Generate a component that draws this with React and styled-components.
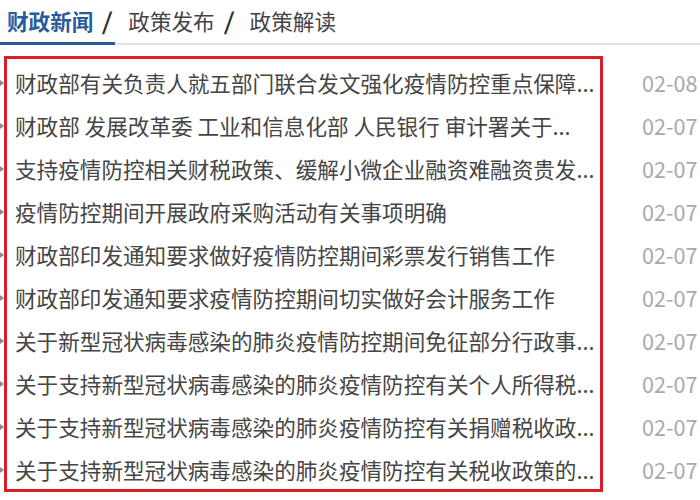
import styled, { createGlobalStyle } from "styled-components";

const GlobalStyle = createGlobalStyle`
  html, body {
    margin: 0;
    padding: 0;
    background: #fff;
  }
  body {
    font-family: "Noto Sans CJK SC", "Liberation Sans", sans-serif;
  }
`;

const Page = styled.div`
  width: 700px;
  height: 500px;
  overflow: hidden;
`;

const TabBar = styled.div`
  display: flex;
  align-items: flex-end;
  height: 43px;
  padding-left: 7px;
  border-bottom: 2px solid #e2e2e2;
  font-size: 21.6px;
`;

const Tab = styled.div`
  display: flex;
  align-items: center;
  height: 100%;
  box-sizing: border-box;
  padding: 0 3px 4px 0;
  margin-right: 13px;
  color: ${(p) => (p.$active ? "#2a5b9c" : "#444")};
  font-weight: ${(p) => (p.$active ? 700 : 400)};
  border-bottom: 3px solid ${(p) => (p.$active ? "#2a5795" : "transparent")};
  margin-bottom: -2px;
  margin-left: ${(p) => (p.$active ? "-7px" : "0")};
  padding-left: ${(p) => (p.$active ? "7px" : "0")};
`;

const Sep = styled.span`
  color: #2e2e2e;
  font-weight: 700;
  font-size: 23px;
  margin-left: 10px;
  transform: skewX(-6deg);
`;

const List = styled.ul`
  position: relative;
  list-style: none;
  margin: 0;
  padding: 16px 0 0;
`;

const Frame = styled.div`
  position: absolute;
  top: 11px;
  left: 4px;
  width: 599px;
  height: 436px;
  box-sizing: border-box;
  border: 3px solid #dc1e2a;
  pointer-events: none;
`;

const Row = styled.li`
  display: flex;
  align-items: center;
  height: 43px;
  font-size: 21.6px;
`;

const Bullet = styled.span`
  width: 0;
  height: 0;
  border-top: 3px solid transparent;
  border-bottom: 3px solid transparent;
  border-left: 4px solid #8a8a8a;
  margin-right: 11px;
  flex: none;
`;

const Title = styled.span`
  width: 600px;
  flex: none;
  color: #454545;
  white-space: nowrap;
  overflow: hidden;
`;

const Date = styled.span`
  margin-left: 27px;
  color: #a9a9a9;
  white-space: nowrap;
`;

const tabs = [
  { label: "财政新闻", active: true },
  { label: "政策发布" },
  { label: "政策解读", last: true },
];

const news = [
  ["财政部有关负责人就五部门联合发文强化疫情防控重点保障...", "02-08"],
  ["财政部 发展改革委 工业和信息化部 人民银行 审计署关于...", "02-07"],
  ["支持疫情防控相关财税政策、缓解小微企业融资难融资贵发...", "02-07"],
  ["疫情防控期间开展政府采购活动有关事项明确", "02-07"],
  ["财政部印发通知要求做好疫情防控期间彩票发行销售工作", "02-07"],
  ["财政部印发通知要求疫情防控期间切实做好会计服务工作", "02-07"],
  ["关于新型冠状病毒感染的肺炎疫情防控期间免征部分行政事...", "02-07"],
  ["关于支持新型冠状病毒感染的肺炎疫情防控有关个人所得税...", "02-07"],
  ["关于支持新型冠状病毒感染的肺炎疫情防控有关捐赠税收政...", "02-07"],
  ["关于支持新型冠状病毒感染的肺炎疫情防控有关税收政策的...", "02-07"],
];

export default function App() {
  return (
    <>
      <GlobalStyle />
      <Page>
        <TabBar>
          {tabs.map((t) => (
            <Tab key={t.label} $active={t.active}>
              {t.label}
              {!t.last && <Sep>/</Sep>}
            </Tab>
          ))}
        </TabBar>
        <List>
          {news.map(([title, date]) => (
            <Row key={title}>
              <Bullet />
              <Title>{title}</Title>
              <Date>{date}</Date>
            </Row>
          ))}
          <Frame />
        </List>
      </Page>
    </>
  );
}
